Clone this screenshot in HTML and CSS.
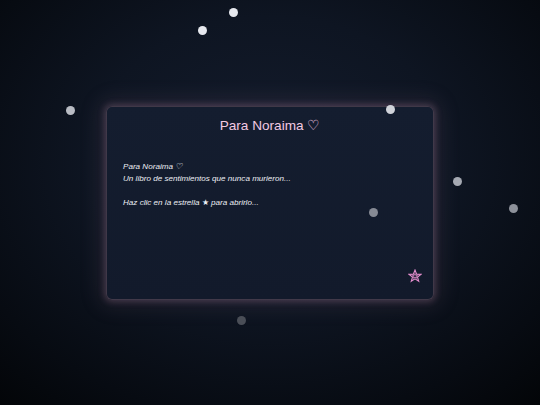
FILE: index.html
```html
<!DOCTYPE html>
<html lang="es">
<head>
<meta charset="utf-8">
<title>Para Noraima</title>
<link rel="stylesheet" href="styles.css">
</head>
<body>
<div class="sky">
  <span class="dot d1"></span>
  <span class="dot d2"></span>
  <span class="dot d3"></span>
  <span class="dot d4"></span>
  <span class="dot d5"></span>
  <span class="dot d6"></span>
  <span class="dot d7"></span>
  <span class="dot d8"></span>
</div>
<main class="stage">
  <section class="card">
    <h1 class="title">Para Noraima ♡</h1>
    <div class="message">
      <p>Para Noraima ♡<br>Un libro de sentimientos que nunca murieron...</p>
      <p>Haz clic en la estrella <span class="mini-star">★</span> para abrirlo...</p>
    </div>
    <div class="card-foot">
      <button class="star" aria-label="Abrir">
        <svg viewBox="0 0 20 20" width="14" height="14"><polygon points="10,1.5 12.3,7.3 18.5,7.6 13.6,11.5 15.3,17.6 10,14.1 4.7,17.6 6.4,11.5 1.5,7.6 7.7,7.3" fill="none" stroke="#e58fcf" stroke-width="1.6" stroke-linejoin="miter"/><polygon points="10,6.5 11,9 13.6,9.1 11.6,10.7 12.3,13.2 10,11.8 7.7,13.2 8.4,10.7 6.4,9.1 9,9" fill="none" stroke="#e58fcf" stroke-width="1.1"/></svg>
      </button>
    </div>
  </section>
  <p class="footer">con amor, siempre</p>
</main>
</body>
</html>
```
FILE: styles.css
```css
html, body {
  margin: 0;
  padding: 0;
  height: 100%;
}
body {
  width: 540px;
  height: 405px;
  overflow: hidden;
  position: relative;
  font-family: "Liberation Sans", Arial, sans-serif;
  background: radial-gradient(ellipse 75% 80% at 50% 40%, #141c2d 0%, #0e1522 45%, #070b12 80%, #030508 100%);
}
.sky {
  position: absolute;
  inset: 0;
  z-index: 2;
  pointer-events: none;
}
.dot {
  position: absolute;
  width: 9px;
  height: 9px;
  border-radius: 50%;
  background: #e6e8ee;
}
.d1 { left: 229px; top: 8px; }
.d2 { left: 198px; top: 26px; }
.d3 { left: 66px; top: 106px; background: #b9bcc4; }
.d4 { left: 386px; top: 105px; background: #d0d3da; }
.d5 { left: 453px; top: 177px; background: #a5a9b2; }
.d6 { left: 509px; top: 204px; background: #8d919a; }
.d7 { left: 369px; top: 208px; background: #868a94; }
.d8 { left: 237px; top: 316px; background: #4a4e57; }

.stage {
  height: 405px;
  display: flex;
  flex-direction: column;
  align-items: center;
  justify-content: center;
  position: relative;
}
.card {
  width: 328px;
  height: 194px;
  box-sizing: border-box;
  padding: 10px 16px 12px 16px;
  background: linear-gradient(180deg, #141d2f 0%, #121a2b 100%);
  border: 1px solid rgba(110, 85, 100, 0.5);
  border-radius: 6px;
  box-shadow: 0 0 6px 2px rgba(190, 140, 170, 0.25), 0 0 20px 8px rgba(150, 110, 135, 0.13);
  display: flex;
  flex-direction: column;
}
.title {
  margin: 0;
  text-align: center;
  font-weight: normal;
  font-size: 13.6px;
  line-height: 18px;
  color: #f2c9e2;
}
.message {
  margin-top: 26px;
  font-style: italic;
  font-size: 8.1px;
  line-height: 12px;
  color: #eceef4;
}
.message p {
  margin: 0 0 12px 0;
}
.mini-star {
  font-style: normal;
  font-size: 8px;
}
.card-foot {
  margin-top: auto;
  display: flex;
  justify-content: flex-end;
}
.star {
  background: none;
  border: 0;
  padding: 0;
  margin-right: -5px;
  margin-bottom: 4px;
  width: 14px;
  height: 14px;
  display: block;
  cursor: pointer;
}
.star svg { display: block; }
.footer {
  position: absolute;
  left: 0;
  right: 0;
  top: 361px;
  margin: 0;
  text-align: center;
  font-size: 8px;
  color: #0b111b;
}
```
